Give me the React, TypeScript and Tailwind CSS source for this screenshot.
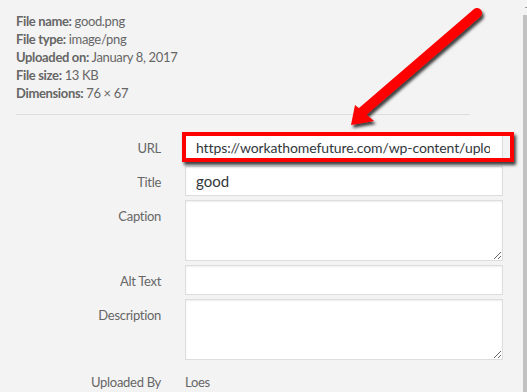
const font = { fontFamily: 'Lato, "Noto Sans", sans-serif' }

function InfoLine({ label, value }: { label: string; value: string }) {
  return (
    <div>
      <span className="font-bold">{label}</span> {value}
    </div>
  )
}

function Row({ label, children }: { label: string; children: React.ReactNode }) {
  return (
    <>
      <div className="relative top-px text-right text-[13px] leading-[30px] tracking-[-0.3px] text-[#666]">{label}</div>
      <div className="w-[318px]">{children}</div>
    </>
  )
}

function Arrow() {
  return (
    <svg
      className="absolute left-0 top-0 pointer-events-none"
      width="527"
      height="392"
      viewBox="0 0 527 392"
    >
      <defs>
        <filter id="shadow" x="-20%" y="-20%" width="140%" height="140%">
          <feDropShadow dx="2" dy="3" stdDeviation="1.5" floodColor="#000" floodOpacity="0.75" />
        </filter>
      </defs>
      <g filter="url(#shadow)">
        <line x1="477" y1="13" x2="362" y2="112" stroke="#ff0000" strokeWidth="10" strokeLinecap="round" />
        <polygon points="351,125 355,105 374,121" fill="#ff0000" />
      </g>
    </svg>
  )
}

export default function App() {
  const input = "w-full h-[30px] border border-[#ddd] bg-white shadow-[inset_0_1px_2px_rgba(0,0,0,0.07)] px-[10px] text-[14px] text-[#32373c] outline-none"
  const area = "block w-full h-[61px] border border-[#ddd] bg-white shadow-[inset_0_1px_2px_rgba(0,0,0,0.07)] resize-y outline-none"

  return (
    <div className="relative flex h-[392px] w-[527px] overflow-hidden bg-[#f3f3f3]" style={font}>
      <div className="flex-1">
        {/* File details */}
        <div className="pl-[16px] pt-[12px] text-[13px] leading-[18px] tracking-[-0.35px] text-[#666]">
          <InfoLine label="File name:" value="good.png" />
          <InfoLine label="File type:" value="image/png" />
          <InfoLine label="Uploaded on:" value="January 8, 2017" />
          <InfoLine label="File size:" value="13 KB" />
          <InfoLine label="Dimensions:" value="76 × 67" />
        </div>
        <div className="ml-[16px] mt-[12px] w-[454px] border-t border-[#ddd]" />

        {/* Settings */}
        <div className="mt-[17px] grid grid-cols-[161px_auto] gap-x-[24px] gap-y-[4px]">
          <Row label="URL">
            <div className="relative">
              <input
                readOnly
                value="https://workathomefuture.com/wp-content/uploads/2017/01/good.png"
                className={input + " bg-[#eee] pr-[12px] tracking-[-0.1px]"}
              />
              <div className="absolute -left-[3px] top-0 -right-[11px] bottom-0 border-4 border-[#ff0000] shadow-[2px_3px_3px_rgba(0,0,0,0.75)]" />
            </div>
          </Row>
          <Row label="Title">
            <input readOnly value="good" className={input + " text-[15px]"} />
          </Row>
          <Row label="Caption">
            <textarea className={area} />
          </Row>
          <Row label="Alt Text">
            <input readOnly value="" className={input} />
          </Row>
          <Row label="Description">
            <textarea className={area} />
          </Row>
        </div>

        <div className="mt-[13px] grid grid-cols-[161px_auto] gap-x-[24px] text-[13px] leading-[18px] tracking-[-0.3px] text-[#666]">
          <div className="text-right">Uploaded By</div>
          <div>Loes</div>
        </div>
      </div>

      {/* Panel edge */}
      <div className="relative w-[4px] shrink-0">
        <div className="absolute right-0 top-[7px] h-px w-[2px] bg-[#999]" />
        <div className="mt-[15px] h-full bg-[#c1c1c1]" />
      </div>

      <Arrow />
    </div>
  )
}
